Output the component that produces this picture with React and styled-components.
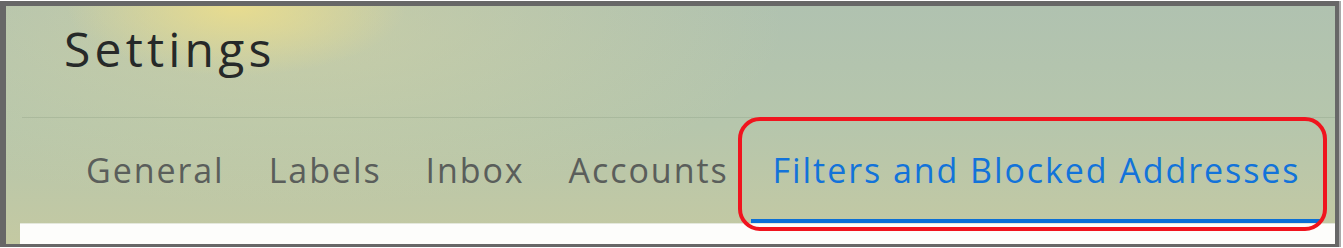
import React from 'react';
import styled, { createGlobalStyle } from 'styled-components';

const GlobalStyle = createGlobalStyle`
    body {
        margin: 0;
        background: #ffffff;
        font-family: "Open Sans", Roboto, sans-serif;
    }
`;

const Frame = styled.div`
    box-sizing: border-box;
    width: 1339px;
    height: 246px;
    margin-top: 1px;
    border-style: solid;
    border-color: #676767;
    border-width: 5px 4px 3px 6px;
    background:
        radial-gradient(ellipse 170px 70px at 230px 0px, rgba(236, 222, 140, 0.9), rgba(236, 222, 140, 0) 100%),
        radial-gradient(ellipse 500px 180px at 280px 20px, rgba(220, 215, 160, 0.5), rgba(220, 215, 160, 0) 100%),
        linear-gradient(180deg, #b0c2b0 0%, #b6c6ac 50%, #c4c9a2 100%);
    display: flex;
    flex-direction: column;
    overflow: hidden;
    box-shadow: 2px 0 0 #a9a9a9;
`;

const Title = styled.h1`
    margin: 0;
    padding: 19px 0 0 58px;
    height: 111px;
    box-sizing: border-box;
    font-size: 48px;
    line-height: 1;
    font-weight: 400;
    color: #262929;
    letter-spacing: 4.2px;
`;

const Divider = styled.div`
    height: 1px;
    margin-left: 16px;
    background: rgba(90, 110, 90, 0.16);
`;

const TabRow = styled.div`
    display: flex;
    padding-left: 58px;
    height: 105px;
`;

const Tab = styled.div`
    position: relative;
    display: flex;
    align-items: center;
    padding: 3px 22px 0;
    font-size: 34px;
    font-weight: 500;
    letter-spacing: 1.93px;
    color: ${(p) => (p.active ? '#1273da' : '#5a5e5b')};
    border-bottom: 4px solid ${(p) => (p.active ? '#0b6fd6' : 'transparent')};
`;

const Highlight = styled.div`
    position: absolute;
    left: -13px;
    right: -5px;
    top: -1px;
    bottom: -12px;
    border: 4px solid #f0141e;
    border-radius: 22px;
    pointer-events: none;
`;

const Panel = styled.div`
    flex: 1;
    margin-left: 14px;
    background: #fdfdfb;
    border-top: 1px solid #e4e8dc;
`;

const tabs = ['General', 'Labels', 'Inbox', 'Accounts', 'Filters and Blocked Addresses'];

function App() {
    return (
        <>
            <GlobalStyle />
            <Frame>
                <Title>Settings</Title>
                <Divider />
                <TabRow>
                    {tabs.map((t, i) => (
                        <Tab key={t} active={i === tabs.length - 1}>
                            {t}
                            {i === tabs.length - 1 && <Highlight />}
                        </Tab>
                    ))}
                </TabRow>
                <Panel />
            </Frame>
        </>
    );
}

export default App;
